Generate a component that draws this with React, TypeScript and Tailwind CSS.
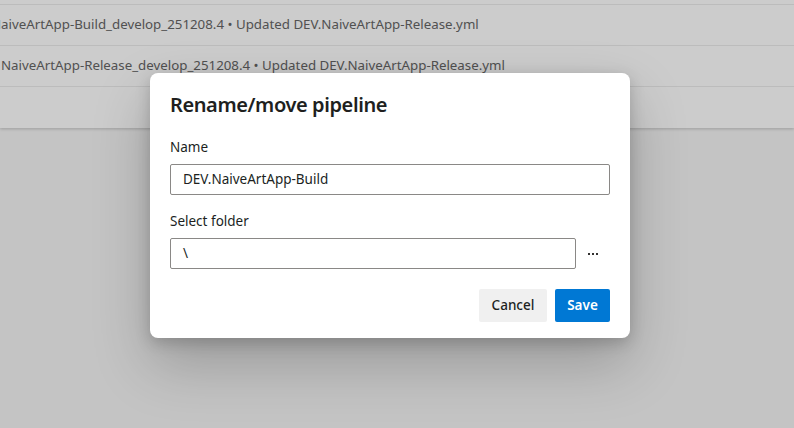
import React from "react";

export default function App() {
  return (
    <div className="relative w-[794px] h-[428px] overflow-hidden bg-[#f5f5f5] font-['Noto_Sans',sans-serif]">
      {/* background list card */}
      <div className="flex flex-col bg-white shadow-[0_1px_3px_rgba(0,0,0,0.2)]">
        <div className="h-[5px] border-b border-[#ececec]" />
        <div className="h-[41px] flex items-center border-b border-[#ececec] overflow-hidden whitespace-nowrap">
          <span className="ml-[-9px] text-[13.3px] text-[#666666]">
            NaiveArtApp-Build_develop_251208.4 • Updated DEV.NaiveArtApp-Release.yml
          </span>
        </div>
        <div className="h-[41px] flex items-center border-b border-[#ececec] overflow-hidden whitespace-nowrap">
          <span className="ml-[1px] text-[13.3px] text-[#666666]">
            NaiveArtApp-Release_develop_251208.4 • Updated DEV.NaiveArtApp-Release.yml
          </span>
        </div>
        <div className="h-[41px]" />
      </div>

      {/* overlay */}
      <div className="absolute inset-0 bg-black/20" />

      {/* dialog */}
      <div className="absolute left-[150px] top-[73px] w-[480px] bg-white rounded-lg shadow-[0_25.6px_57.6px_0_rgba(0,0,0,0.22),0_4.8px_14.4px_0_rgba(0,0,0,0.18)] px-5 pt-[18px] pb-[16px] text-[#201f1e]">
        <h1 className="text-[20px] font-semibold leading-[28px] tracking-[-0.4px]">
          Rename/move pipeline
        </h1>
        <div className="mt-[19px] text-[13.5px] leading-[18px]">Name</div>
        <div className="mt-[8px] h-[31px] border border-[#8a8886] rounded-[2px] flex items-center px-3 text-[13.5px]">
          DEV.NaiveArtApp-Build
        </div>
        <div className="mt-[17px] text-[13.5px] leading-[18px]">Select folder</div>
        <div className="mt-[8px] flex items-center">
          <div className="flex-1 h-[31px] border border-[#8a8886] rounded-[2px] flex items-center px-3 text-[13.5px]">
            \
          </div>
          <div className="w-[34px] flex justify-center items-center gap-[2px]" aria-label="More">
            <span className="w-[2px] h-[2px] bg-[#323130]" />
            <span className="w-[2px] h-[2px] bg-[#323130]" />
            <span className="w-[2px] h-[2px] bg-[#323130]" />
          </div>
        </div>
        <div className="mt-[20px] flex justify-end gap-2">
          <button className="h-[33px] w-[68px] rounded-[2px] bg-[#f0f0f0] text-[13.5px] font-medium text-[#201f1e]">
            Cancel
          </button>
          <button className="h-[33px] w-[55px] rounded-[2px] bg-[#0078d4] text-[13.5px] font-semibold text-white">
            Save
          </button>
        </div>
      </div>
    </div>
  );
}
